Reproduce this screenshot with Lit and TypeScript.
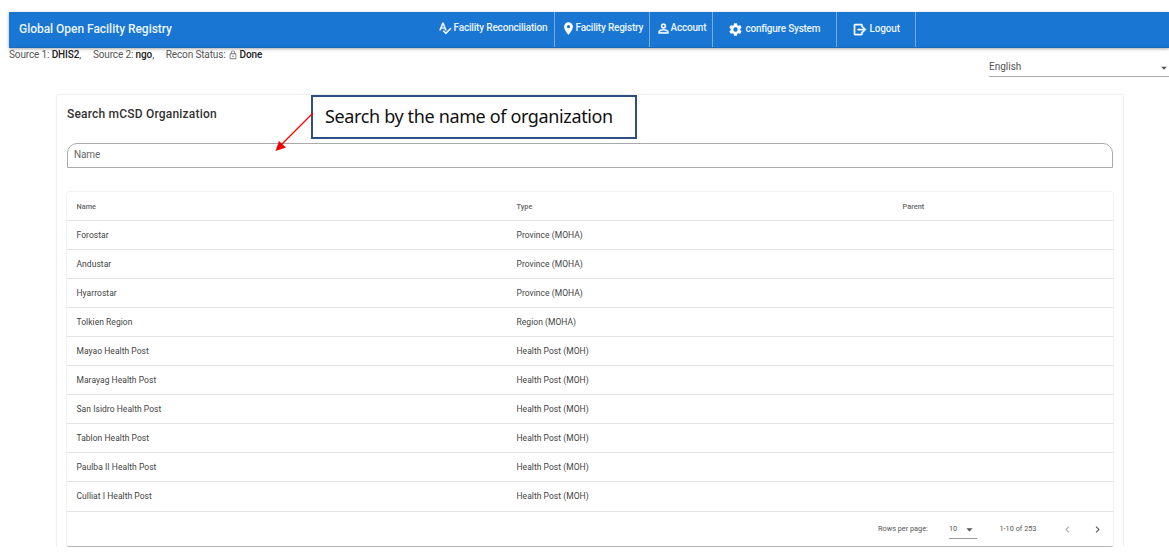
import { LitElement, html, css, svg } from "lit";
import { customElement } from "lit/decorators.js";

const ICONS: Record<string, string> = {
  spell: "M21.59 11.59L13.5 19.68L9.83 16L8.42 17.41L13.5 22.5L23 13M6.43 11L8.5 5.5L10.57 11M12.45 16H14.54L9.43 3H7.57L2.46 16H4.55L5.67 13H11.31L12.45 16Z",
  pin: "M12 11.5A2.5 2.5 0 0 1 9.5 9A2.5 2.5 0 0 1 12 6.5A2.5 2.5 0 0 1 14.5 9A2.5 2.5 0 0 1 12 11.5M12 2A7 7 0 0 0 5 9C5 14.25 12 22 12 22S19 14.25 19 9A7 7 0 0 0 12 2Z",
  person: "M12 13C9.33 13 4 14.33 4 17V20H20V17C20 14.33 14.67 13 12 13M12 4A4 4 0 0 0 8 8A4 4 0 0 0 12 12A4 4 0 0 0 16 8A4 4 0 0 0 12 4M12 14.9C14.97 14.9 18.1 16.36 18.1 17V18.1H5.9V17C5.9 16.36 9 14.9 12 14.9M12 5.9A2.1 2.1 0 0 1 14.1 8A2.1 2.1 0 0 1 12 10.1A2.1 2.1 0 0 1 9.9 8A2.1 2.1 0 0 1 12 5.9Z",
  gear: "M12 15.5A3.5 3.5 0 0 1 8.5 12A3.5 3.5 0 0 1 12 8.5A3.5 3.5 0 0 1 15.5 12A3.5 3.5 0 0 1 12 15.5M19.43 12.97C19.47 12.65 19.5 12.33 19.5 12S19.47 11.34 19.43 11L21.54 9.37C21.73 9.22 21.78 8.95 21.66 8.73L19.66 5.27C19.54 5.05 19.27 4.96 19.05 5.05L16.56 6.05C16.04 5.66 15.5 5.32 14.87 5.07L14.5 2.42C14.46 2.18 14.25 2 14 2H10C9.75 2 9.54 2.18 9.5 2.42L9.13 5.07C8.5 5.32 7.96 5.66 7.44 6.05L4.95 5.05C4.73 4.96 4.46 5.05 4.34 5.27L2.34 8.73C2.21 8.95 2.27 9.22 2.46 9.37L4.57 11C4.53 11.34 4.5 11.67 4.5 12S4.53 12.65 4.57 12.97L2.46 14.63C2.27 14.78 2.21 15.05 2.34 15.27L4.34 18.73C4.46 18.95 4.73 19.03 4.95 18.95L7.44 17.94C7.96 18.34 8.5 18.68 9.13 18.93L9.5 21.58C9.54 21.82 9.75 22 10 22H14C14.25 22 14.46 21.82 14.5 21.58L14.87 18.93C15.5 18.67 16.04 18.34 16.56 17.94L19.05 18.95C19.27 19.03 19.54 18.95 19.66 18.73L21.66 15.27C21.78 15.05 21.73 14.78 21.54 14.63L19.43 12.97Z",
  logout: "M15 3H5C3.89 3 3 3.89 3 5V19C3 20.1 3.9 21 5 21H15C16.1 21 17 20.1 17 19V16H15V19H5V5H15V8H17V5C17 3.9 16.1 3 15 3M16.08 15.58L17.5 17L22.5 12L17.5 7L16.08 8.41L18.67 11H9V13H18.67L16.08 15.58Z",
  lock: "M12 17A2 2 0 0 1 10 15A2 2 0 0 1 12 13A2 2 0 0 1 14 15A2 2 0 0 1 12 17M18 20V10H6V20H18M18 8A2 2 0 0 1 20 10V20A2 2 0 0 1 18 22H6A2 2 0 0 1 4 20V10A2 2 0 0 1 6 8H7V6A5 5 0 0 1 17 6V8H18M12 3A3 3 0 0 0 9 6V8H15V6A3 3 0 0 0 12 3Z",
  left: "M15.41 16.58L10.83 12L15.41 7.41L14 6L8 12L14 18L15.41 16.58Z",
  right: "M8.59 16.58L13.17 12L8.59 7.41L10 6L16 12L10 18L8.59 16.58Z",
  caret: "M7 10L12 15L17 10H7Z",
};

const icon = (name: string, size: number) => html`<svg class="icon" width=${size} height=${size} viewBox="0 0 24 24">${svg`<path d=${ICONS[name]} />`}</svg>`;

const ROWS: [string, string][] = [
  ["Forostar", "Province (MOHA)"],
  ["Andustar", "Province (MOHA)"],
  ["Hyarrostar", "Province (MOHA)"],
  ["Tolkien Region", "Region (MOHA)"],
  ["Mayao Health Post", "Health Post (MOH)"],
  ["Marayag Health Post", "Health Post (MOH)"],
  ["San Isidro Health Post", "Health Post (MOH)"],
  ["Tablon Health Post", "Health Post (MOH)"],
  ["Paulba II Health Post", "Health Post (MOH)"],
  ["Culliat I Health Post", "Health Post (MOH)"],
];

@customElement("app-root")
export class AppRoot extends LitElement {
  static styles = css`
    :host { display: block; position: relative; height: 560px; overflow: hidden; box-sizing: border-box; padding: 12px 0 0 9px; background: #fff; font-family: Roboto, sans-serif; color: #333; }
    * { box-sizing: border-box; }
    .icon { display: block; flex: none; fill: currentColor; }
    .bar { display: flex; height: 36px; background: #1976d2; color: #e8f4ff; border-bottom: 1px solid #1a69ba; box-shadow: 0 1px 3px rgba(0,0,0,.35); font-weight: 500; }
    .brand { width: 421px; padding: 9px 0 0 10px; font-size: 12px; line-height: 16px; letter-spacing: -.03px; white-space: nowrap; }
    .nav { display: flex; align-items: flex-start; border-right: 1px solid #75ade4; height: 35px; font-size: 10px; line-height: 14px; letter-spacing: -.17px; padding-top: 9px; white-space: nowrap; }
    .n1 { width: 125px; padding-left: 8px; gap: 1.5px; }
    .n2 { width: 95px; padding-left: 5.5px; gap: 0; letter-spacing: -.21px; }
    .n3 { width: 63px; padding-left: 6px; gap: 0; letter-spacing: -.2px; }
    .n3 span { margin-left: -.5px; }
    .n4 { width: 124px; padding-left: 15px; gap: 2.5px; letter-spacing: -.24px; }
    .n5 { width: 79px; padding-left: 15px; gap: 2.5px; }
    .n4, .n5 { padding-top: 10px; }
    .nav .icon { color: #fff; stroke: #fff; stroke-width: .7; }
    .n4 .icon, .n2 .icon { stroke: none; }
    .sub { display: flex; justify-content: space-between; height: 47px; }
    .status { display: flex; height: 14px; font-size: 10px; line-height: 14px; letter-spacing: -.13px; color: #555; white-space: pre; }
    .status b { font-weight: 500; color: #222; }
    .status .g { margin-left: 11.8px; }
    .status .icon { color: #777; margin: 2px 2px 0 2px; }
    .lang { display: flex; justify-content: space-between; width: 180px; height: 20px; margin-top: 9px; border-bottom: 1px solid #aaa; font-size: 10px; line-height: 20px; color: #555; }
    .lang .icon { margin: 4px -2px 0 0; }
    .card { width: 1066px; height: 452px; margin-left: 48px; padding: 12px 10px 0; box-shadow: 0 0 2px rgba(0,0,0,.2); clip-path: inset(-3px -3px 0 -3px); }
    .heading { margin: 0; height: 36px; font-size: 12px; line-height: 15px; letter-spacing: .2px; font-weight: 500; color: #333; }
    .field { height: 25px; border: 1px solid #aaa; border-radius: 10px 10px 0 0; padding-left: 6px; font-size: 10px; line-height: 22px; letter-spacing: -.1px; color: #666; }
    .table { margin-top: 24px; height: 355px; border-radius: 2px; box-shadow: 0 0 2px rgba(0,0,0,.2); border-bottom: 1px solid #b5b5b5; }
    .row { display: grid; grid-template-columns: 440px 386px 1fr; height: 29px; border-bottom: 1px solid #e3e3e3; padding-left: 9.5px; font-size: 8.5px; line-height: 28px; letter-spacing: .04px; color: #444; }
    .row:nth-last-child(2) { height: 30px; }
    .row.head { font-size: 7.3px; line-height: 29px; font-weight: 500; color: #666; }
    .foot { display: flex; height: 34px; font-size: 7.3px; line-height: 34px; color: #555; padding-left: 811px; white-space: nowrap; }
    .rpp { width: 71px; }
    .size { display: flex; justify-content: space-between; width: 28px; height: 27px; border-bottom: 1px solid #999; }
    .size .icon { margin: 10px 0 0; }
    .range { width: 60px; margin-left: 22.5px; }
    .prev { color: #aaa; margin: 11px 0 0 1px; }
    .next { margin: 11px 0 0 17px; }
    .callout { position: absolute; left: 311px; top: 95px; width: 326px; height: 44px; border: 2px solid #2f4f7f; background: #fff; padding-left: 12px; font-family: "Noto Sans", sans-serif; font-size: 18px; line-height: 39px; letter-spacing: -.36px; color: #111; white-space: nowrap; }
    .arrow { position: absolute; left: 270px; top: 108px; }
    .shaft { stroke: #ff0000; stroke-width: 1.2; }
    .tip { fill: #f00000; }
  `;

  render() {
    return html`
      <header class="bar">
        <div class="brand"><span>Global Open Facility Registry</span></div>
        <div class="nav n1">${icon("spell", 14)}<span>Facility Reconciliation</span></div>
        <div class="nav n2">${icon("pin", 15)}<span>Facility Registry</span></div>
        <div class="nav n3">${icon("person", 15)}<span>Account</span></div>
        <div class="nav n4">${icon("gear", 15)}<span>configure System</span></div>
        <div class="nav n5">${icon("logout", 15)}<span>Logout</span></div>
      </header>
      <div class="sub">
        <div class="status"><span>Source 1: <b>DHIS2</b>,</span><span class="g">Source 2: <b>ngo</b>,</span><span class="g">Recon Status:</span>${icon("lock", 10)}<b>Done</b></div>
        <div class="lang"><span>English</span>${icon("caret", 14)}</div>
      </div>
      <main class="card">
        <h1 class="heading"><span>Search mCSD Organization</span></h1>
        <div class="field">Name</div>
        <section class="table">
          <div class="row head"><span>Name</span><span>Type</span><span>Parent</span></div>
          ${ROWS.map(([name, type]) => html`<div class="row"><span>${name}</span><span>${type}</span><span></span></div>`)}
          <div class="foot">
            <span class="rpp">Rows per page:</span>
            <div class="size"><span>10</span>${icon("caret", 15)}</div>
            <span class="range">1-10 of 253</span>
            <div class="prev">${icon("left", 13)}</div>
            <div class="next">${icon("right", 13)}</div>
          </div>
        </section>
      </main>
      <div class="callout"><span>Search by the name of organization</span></div>
      <svg class="arrow" width="48" height="48"><line class="shaft" x1="43" y1="5" x2="11" y2="37" /><path class="tip" d="M5.5 43L9 33L16 39.5Z" /></svg>
    `;
  }
}
